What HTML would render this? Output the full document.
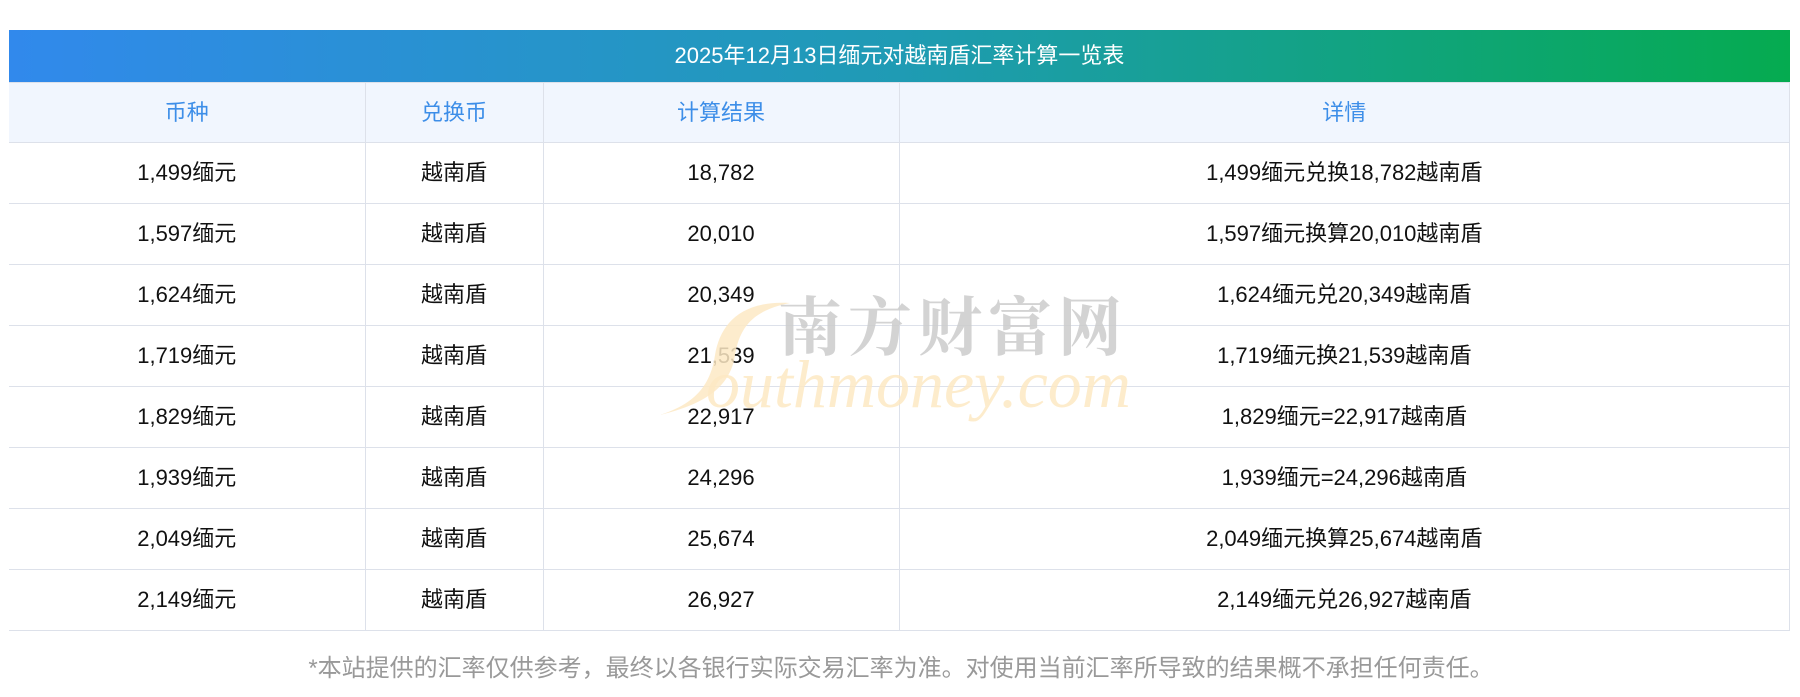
<!DOCTYPE html>
<html><head><meta charset="utf-8"><style>
body{margin:0;width:1800px;height:697px;background:#fff;font-family:"Liberation Sans","Noto Sans CJK SC",sans-serif;position:relative;overflow:hidden}
.title{position:absolute;left:9px;top:30px;width:1781px;height:52px;background:linear-gradient(90deg,#3189ec,#1f9bb4 50%,#05ab50);color:#fff;font-size:22px;line-height:52px;text-align:center}
table{position:absolute;left:9px;top:82px;width:1781px;border-collapse:collapse;table-layout:fixed}
td,th{border:1px solid #dde1ea;text-align:center;font-size:22px;line-height:26px;color:#111;font-weight:normal;height:60px;padding:0;vertical-align:middle}
th{background:#f1f6fe;color:#3d8ee8;height:59px}
tr>*:first-child{border-left:none}
.foot{position:absolute;left:6px;width:1790px;top:648px;text-align:center;color:#999;font-size:24px}
.wm1{position:absolute;left:778px;top:288px;font-size:64px;color:#ccc;opacity:.85;letter-spacing:6px;font-family:"Noto Serif CJK SC",serif;font-weight:bold;line-height:70px}
.wm2{position:absolute;left:706px;top:346px;font-size:68px;color:#fde9c4;font-family:"Liberation Serif",serif;font-style:italic;opacity:.85;line-height:76px}
.s{position:absolute;left:660px;top:295px}
</style></head><body>
<div class="title">2025年12月13日缅元对越南盾汇率计算一览表</div>
<table>
<colgroup><col style="width:356px"><col style="width:178px"><col style="width:356px"><col></colgroup>
<tr><th>币种</th><th>兑换币</th><th>计算结果</th><th>详情</th></tr>
<tr><td>1,499缅元</td><td>越南盾</td><td>18,782</td><td>1,499缅元兑换18,782越南盾</td></tr>
<tr><td>1,597缅元</td><td>越南盾</td><td>20,010</td><td>1,597缅元换算20,010越南盾</td></tr>
<tr><td>1,624缅元</td><td>越南盾</td><td>20,349</td><td>1,624缅元兑20,349越南盾</td></tr>
<tr><td>1,719缅元</td><td>越南盾</td><td>21,539</td><td>1,719缅元换21,539越南盾</td></tr>
<tr><td>1,829缅元</td><td>越南盾</td><td>22,917</td><td>1,829缅元=22,917越南盾</td></tr>
<tr><td>1,939缅元</td><td>越南盾</td><td>24,296</td><td>1,939缅元=24,296越南盾</td></tr>
<tr><td>2,049缅元</td><td>越南盾</td><td>25,674</td><td>2,049缅元换算25,674越南盾</td></tr>
<tr><td>2,149缅元</td><td>越南盾</td><td>26,927</td><td>2,149缅元兑26,927越南盾</td></tr>
</table>
<svg class="s" width="130" height="120" viewBox="0 0 130 120"><path d="M130 8 C80 5 60 30 55 60 C50 95 30 110 0 120 C40 110 70 95 75 60 C80 30 95 15 130 8Z" fill="#fde9c4" opacity=".85"/></svg>
<div class="wm1">南方财富网</div>
<div class="wm2">outhmoney.com</div>
<div class="foot">*本站提供的汇率仅供参考，最终以各银行实际交易汇率为准。对使用当前汇率所导致的结果概不承担任何责任。</div>
</body></html>
